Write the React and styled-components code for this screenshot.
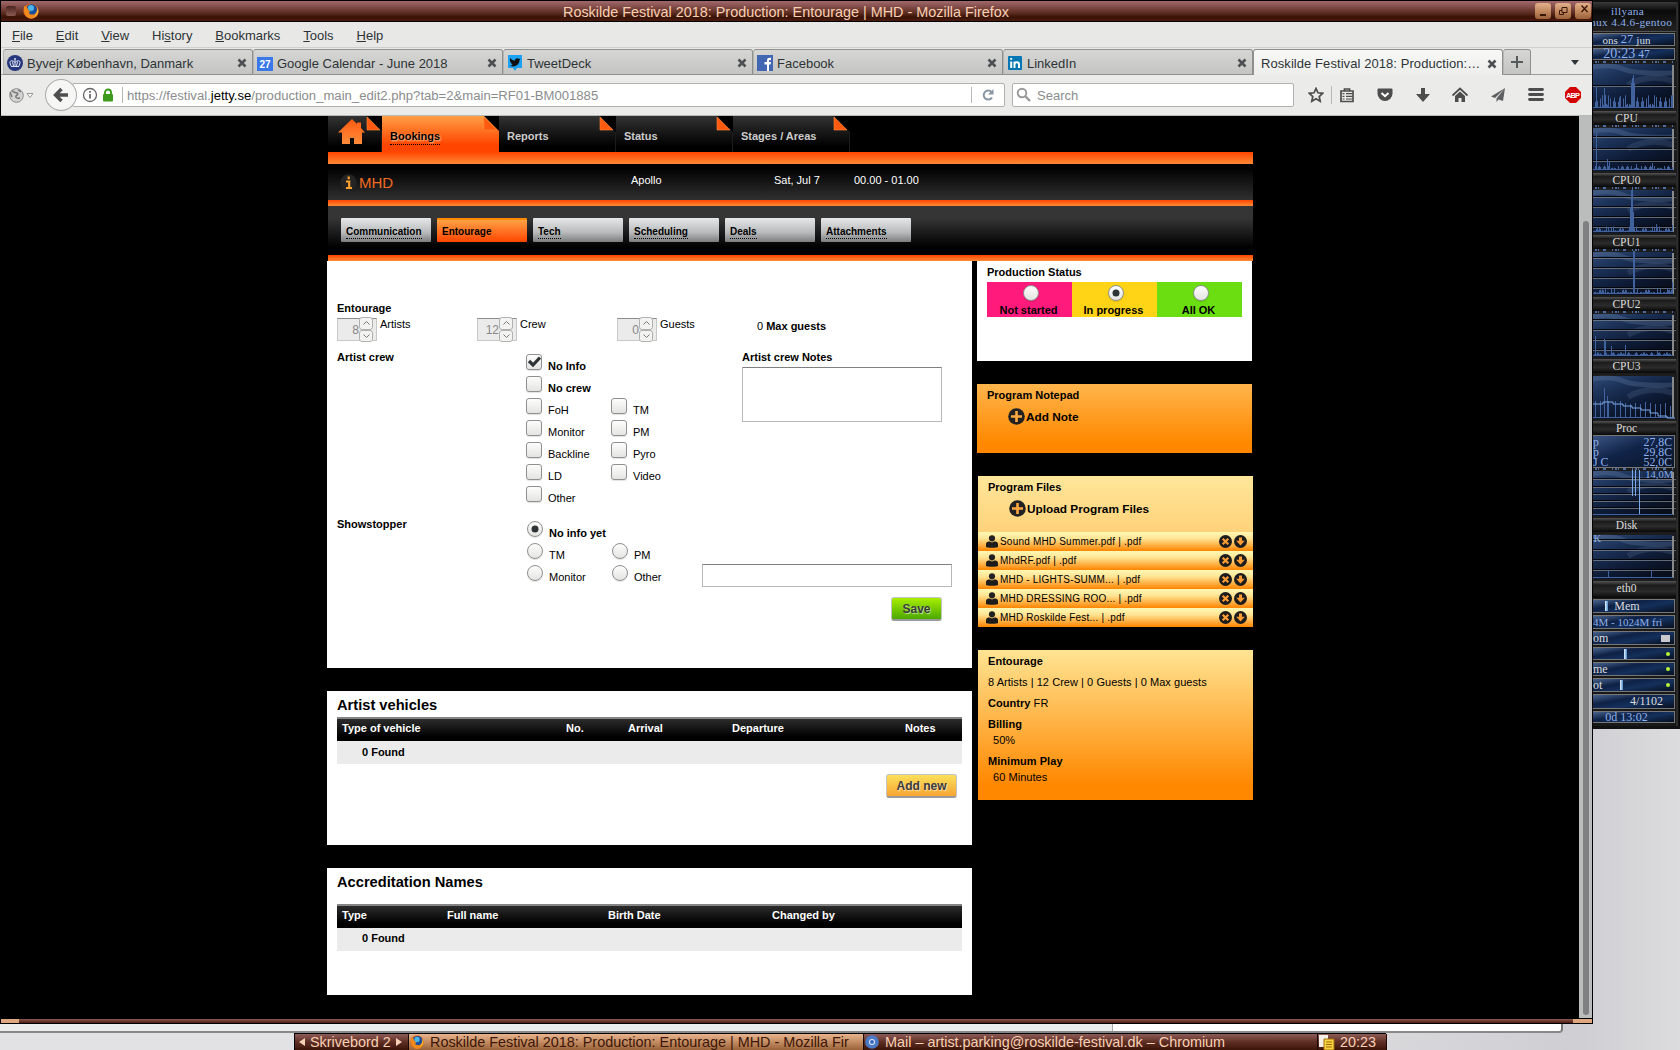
import React from "react";
import styled, { createGlobalStyle, css } from "styled-components";

const GlobalStyle = createGlobalStyle`
  * { box-sizing: border-box; }
  body {
    margin: 0;
    overflow: hidden;
    font-family: "Liberation Sans", Arial, sans-serif;
  }
  svg { display: block; flex: none; }
`;

/* desktop */

const Desktop = styled.div`
  width: 1680px;
  height: 1050px;
  display: grid;
  grid-template-columns: 1593px 87px;
  grid-template-rows: 1024px 26px;
  background: linear-gradient(90deg, #e2e2e4 70%, #cfcfd3 94%, #dcdcde);
  overflow: hidden;
`;

const Window = styled.div`
  display: flex;
  flex-direction: column;
  background: #000;
  padding: 0 1px;
`;

const TitleBar = styled.div`
  height: 22px;
  display: flex;
  align-items: center;
  border-top: 1px solid #000;
  border-bottom: 1px solid #000;
  background: linear-gradient(#a06a6c, #86504e 25%, #5c2c20 60%, #3a1206 80%, #4a1c0e);
  color: #f8d0b4;
`;

const WindowMenu = styled.i`
  width: 10px;
  height: 10px;
  margin: 0 7px 0 5px;
  border-radius: 2px;
  background: linear-gradient(#4c2420, #8a5a50);
`;

const WindowTitle = styled.div`
  flex: 1;
  padding-left: 524px;
  font-size: 14.4px;
  line-height: 20px;
  padding-top: 2px;
  white-space: nowrap;
`;

const WindowButtons = styled.div`
  display: flex;
  gap: 4px;
  padding-right: 1px;
`;

const WindowButton = styled.div`
  width: 16px;
  height: 16px;
  border-radius: 3px;
  background: linear-gradient(#e2b08c, #c48a60 50%, #9a6038);
`;

const MenuBar = styled.div`
  height: 26px;
  display: flex;
  gap: 22.9px;
  padding-left: 11px;
  font-size: 13px;
  line-height: 28px;
  color: #2e3436;
  background: #e8e8e6;
  border-bottom: 1px solid #cfcfcd;
`;

/* browser tabs */

const TabStrip = styled.div`
  height: 27px;
  display: flex;
  align-items: flex-end;
  padding-left: 2px;
  background: #e8e8e6;
  box-shadow: inset 0 -1px #9a9c9a;
`;

const BrowserTab = styled.div`
  width: ${(p) => p.$width || 250}px;
  height: 26px;
  display: flex;
  align-items: center;
  gap: 4px;
  padding: 2px 5px 0 ${(p) => (p.$active ? 7 : 3)}px;
  border: 1px solid #8e908e;
  border-left-color: ${(p) => (p.$active ? "#8e908e" : "#b4b6b4")};
  border-bottom-width: ${(p) => (p.$active ? 0 : 1)}px;
  border-radius: 3px 3px 0 0;
  background: ${(p) =>
    p.$active ? "linear-gradient(#f8f8f7, #edeeec)" : "linear-gradient(#d6d7d5, #c4c5c3)"};
  color: #2e3436;
  font-size: 13px;
  white-space: nowrap;
`;

const TabLabel = styled.span`
  flex: 1;
  overflow: hidden;
  letter-spacing: ${(p) => (p.$wide ? 0.07 : 0)}px;
`;

const NewTab = styled(BrowserTab)`
  width: 28px;
  padding: 0;
  justify-content: center;
`;

const TabListArrow = styled.div`
  flex: 1;
  height: 26px;
  display: flex;
  align-items: center;
  justify-content: flex-end;
  padding-right: 13px;
`;

/* address bar */

const Toolbar = styled.div`
  height: 41px;
  display: flex;
  align-items: center;
  padding-left: 8px;
  background: #ebebe9;
  border-bottom: 1px solid #b8bab8;
  color: #8a8c8c;
  font-size: 13px;
`;

const BackButton = styled.div`
  width: 32px;
  height: 32px;
  margin: 0 -5px 0 11px;
  display: grid;
  place-items: center;
  border: 1px solid #a9abaa;
  border-radius: 50%;
  background: #f6f6f5;
  z-index: 1;
`;

const Field = styled.div`
  width: ${(p) => p.$width}px;
  height: 24px;
  display: flex;
  align-items: center;
  background: #fff;
  border: 1px solid #b0b2b1;
  border-radius: 2px;
`;

const Separator = styled.i`
  width: 1px;
  height: ${(p) => p.$height || 16}px;
  background: #b7b9b8;
`;

const Url = styled.div`
  flex: 1;
  padding-left: 4px;
  font-size: 13.12px;
  b { color: #000; font-weight: 400; }
`;

const ToolIcons = styled.div`
  display: flex;
  align-items: center;
  margin-left: 14px;
`;

const ToolIcon = styled.div`
  width: 37.6px;
  display: grid;
  place-items: center;
`;

/* page */

const Viewport = styled.div`
  height: 902px;
  display: flex;
  justify-content: space-between;
  background: #000;
`;

const ScrollBar = styled.div`
  width: 13px;
  padding: 105px 3px 0 4px;
  background: #babdbc;
`;

const ScrollThumb = styled.div`
  height: 794px;
  border-radius: 3px;
  background: #7d8182;
`;

const WindowFooter = styled.div`
  height: 6px;
  border: solid #000;
  border-width: 1px 0;
  background: linear-gradient(90deg, #e0a880 18px, transparent 18px, transparent 1572px, #e0a880 1572px),
    linear-gradient(#8c5850, #4a1c10);
`;

const Page = styled.div`
  width: 926px;
  margin-left: 326px;
`;

const Header = styled.div`
  margin-left: 1px;
  width: 925px;
`;

const MainTabs = styled.div`
  height: 36px;
  display: flex;
`;

const MainTab = styled.div`
  width: ${(p) => p.$width || 117}px;
  padding: ${(p) => (p.$width ? "2px 0 0 10px" : "14px 0 0 8px")};
  display: flex;
  justify-content: space-between;
  background: linear-gradient(#323232, #000 85%);
  border-right: 1px solid #1c1c1c;
  color: #ccc;
  font-size: 11px;
  font-weight: bold;
  line-height: 13px;
  ${(p) =>
    p.$active &&
    css`
      background: linear-gradient(#ff9f45, #ff4500 80%);
      border-right: 0;
      color: #000;
      text-shadow: 1px 1px 2px #ffd0a0;
    `}
`;

const Fold = styled.svg`
  margin: ${(p) => (p.$home ? -2 : -14)}px -1px 0 0;
`;

const Dotted = styled.span`
  align-self: flex-start;
  padding-bottom: 1px;
  border-bottom: 1px dotted #000;
`;

const OrangeBar = styled.div`
  height: ${(p) => p.$height}px;
  background: linear-gradient(#ff4500, #ff8a35);
`;

const ArtistBar = styled.div`
  height: 36px;
  display: grid;
  grid-template-columns: 31px 272px 143px 80px 1fr;
  padding-top: 8px;
  background: linear-gradient(#000 10%, #303030);
  color: #fff;
  font-size: 11px;
  line-height: 17px;
`;

const ArtistIcon = styled.div`
  padding: 2px 0 0 12px;
`;

const ArtistName = styled.div`
  font-size: 15px;
  line-height: 21px;
  color: #f26a21;
`;

const SubTabs = styled.div`
  height: 49px;
  display: flex;
  gap: 6px;
  padding: 12px 0 0 13px;
  background: linear-gradient(#353535 25%, #000 85%);
`;

const SubTab = styled.div`
  width: 90px;
  height: 24px;
  padding: 8px 0 0 5px;
  display: flex;
  border-radius: 1px;
  background: linear-gradient(#e6e7e9, #b9babc 60%, #7c7d7f);
  color: #000;
  font-size: 10px;
  font-weight: bold;
  line-height: 11px;
  ${(p) =>
    p.$active &&
    css`
      background: linear-gradient(#ff8c00 8%, #ffa045 10%, #ff4500);
      ${Dotted} { border: 0; }
    `}
`;

const Columns = styled.div`
  display: flex;
  gap: 5px;
`;

const MainColumn = styled.div`
  width: 645px;
  display: flex;
  flex-direction: column;
  gap: 23px;
`;

const Card = styled.section`
  height: ${(p) => p.$height}px;
  padding: 0 10px;
  background: #fff;
  font-size: 11px;
`;

const FormTitle = styled.div`
  padding-top: 40px;
  height: 56px;
  font-weight: bold;
  line-height: 14px;
`;

const CountRow = styled.div`
  height: 33px;
  display: grid;
  grid-template-columns: 140px 140px 140px 1fr;
`;

const Count = styled.div`
  display: flex;
  gap: 3px;
  line-height: 14px;
`;

const MaxGuests = styled.div`
  padding: 2px 0 0;
  line-height: 14px;
`;

const NumberBox = styled.div`
  width: 40px;
  height: 23px;
  margin-top: 1px;
  display: flex;
  justify-content: flex-end;
  background: #ebebeb;
  border: 1px solid #c8c8c8;
  border-top-color: #8a8a8a;
  color: #888;
  font-size: 12px;
  line-height: 22px;
`;

const Spinner = styled.div`
  margin: -2px 3px 0 0;
`;

const Step = styled.div`
  width: 14px;
  height: 12.5px;
  display: grid;
  place-items: center;
  background: #f3f3f2;
  border: 1px solid #b0b2b0;
  border-radius: 3px;
`;

const CrewRow = styled.div`
  display: grid;
  grid-template-columns: ${(p) => (p.$tight ? "190px 175px 1fr" : "189px 216px 1fr")};
  height: ${(p) => p.$height}px;
`;

const Label = styled.div`
  font-weight: bold;
  line-height: 14px;
`;

const Options = styled.div`
  display: grid;
  grid-template-columns: 85px 85px;
  grid-auto-rows: 22px;
  padding-top: 4px;
`;

const Option = styled.div`
  display: flex;
  gap: 6px;
  grid-column: ${(p) => (p.$wide ? "1 / 3" : "auto")};
  font-weight: ${(p) => (p.$wide ? "bold" : "normal")};
  line-height: 25px;
  white-space: nowrap;
`;

const Check = styled.div`
  flex: none;
  width: 16px;
  height: 16px;
  border: 1px solid #8f918f;
  border-radius: ${(p) => (p.$round ? "50%" : "3px")};
  background: linear-gradient(#fdfdfd, #e4e4e2);
  box-shadow: 0 1px 1px rgba(0, 0, 0, 0.12);
`;

const NotesBox = styled.div`
  width: 200px;
  height: 55px;
  margin-top: 3px;
  border: 1px solid #b8b8b8;
  border-top-color: #808080;
`;

const OtherInput = styled.div`
  width: 250px;
  height: 23px;
  margin-top: 47px;
  border: 1px solid #b8b8b8;
  border-top-color: #808080;
`;

const Button = styled.div`
  width: ${(p) => p.$width}px;
  height: 24px;
  margin-left: auto;
  margin-right: ${(p) => p.$inset}px;
  border: 1px solid #c4c4c4;
  border-bottom: 2px solid #9a9a9a;
  border-radius: 3px;
  background: ${(p) =>
    p.$green ? "linear-gradient(#a8ee00, #4aa800)" : "linear-gradient(#fbe05a, #f7a533)"};
  color: #3a3a3a;
  font-size: 12px;
  font-weight: bold;
  line-height: 23px;
  text-align: center;
  text-shadow: 1px 1px 1px rgba(255, 255, 255, 0.6);
`;

const TableTitle = styled.h2`
  margin: 0;
  height: ${(p) => p.$height}px;
  padding-top: 5px;
  font-size: 14.67px;
  line-height: 18px;
`;

const TableHead = styled.div`
  height: 24px;
  display: grid;
  grid-template-columns: ${(p) => p.$columns};
  padding-left: 5px;
  border-top: 2px solid #848484;
  background: linear-gradient(#2c2c2c, #000 80%);
  color: #fff;
  font-weight: bold;
  line-height: 18px;
`;

const TableEmpty = styled.div`
  height: 23px;
  margin-bottom: 10px;
  padding-left: 25px;
  background: #ebebeb;
  font-weight: bold;
  line-height: ${(p) => p.$line || 23}px;
`;

/* sidebar */

const SideColumn = styled.div`
  width: 276px;
  display: flex;
  flex-direction: column;
  gap: 23px;
`;

const SideCard = styled.section`
  width: 275px;
  height: ${(p) => p.$height}px;
  padding: 4px 10px 0;
  background: ${(p) => p.$background || "#fff"};
  align-self: ${(p) => (p.$shift ? "flex-end" : "flex-start")};
  font-size: 11px;
  line-height: 14px;
`;

const StatusRow = styled.div`
  margin-top: 3px;
  display: grid;
  grid-template-columns: repeat(3, 85px);
`;

const Status = styled.div`
  height: 35px;
  display: flex;
  flex-direction: column;
  align-items: center;
  gap: 2px;
  padding: 3px 2px 0 0;
  background: ${(p) => p.$color};
  font-weight: bold;
  ${Check} { margin-left: 5px; }
`;

const AddLink = styled.div`
  display: flex;
  align-items: center;
  gap: 1px;
  margin: 6px 0 0 21px;
  font-size: 11.82px;
  font-weight: bold;
`;

const FileList = styled.div`
  margin: 15px -10px 0;
`;

const FileRow = styled.div`
  height: 19px;
  display: flex;
  align-items: center;
  gap: 2px;
  padding: 0 6px 0 8px;
  background: linear-gradient(#fff6b0 5%, #ffe493 35%, #ff8400);
  font-size: 10px;
  letter-spacing: 0.2px;
`;

const FileName = styled.span`
  flex: 1;
`;

const Fact = styled.div`
  margin-bottom: 7px;
  letter-spacing: 0.05px;
  p { margin: 2px 0 0 5px; }
`;

/* system monitor */

const Monitor = styled.aside`
  width: 87px;
  height: 729px;
  display: flex;
  flex-direction: column;
  background: linear-gradient(90deg, #191919 83px, #3a3a3a 84px, #050505 86px);
  border-top: 2px solid #111;
  border-bottom: 3px solid #111;
  color: #dcdcdc;
  font-family: "Liberation Serif", "Times New Roman", serif;
  overflow: hidden;
`;

const HostName = styled.div`
  height: 30px;
  width: 83px;
  padding: 4px 0 0;
  border-bottom: 1px solid #555;
  background: linear-gradient(#3a3a3a, #0a0a0a 30%, #222);
  color: #8fb0ea;
  font-size: 11.4px;
  line-height: 11px;
  letter-spacing: 0.3px;
  white-space: nowrap;
  p { margin: 0 0 0 18px; }
  p + p { margin: 0 0 0 -3px; }
`;

const Meter = styled.div`
  width: 82px;
  height: ${(p) => p.$height}px;
  margin: ${(p) => p.$gap || 1}px 0;
  display: flex;
  align-items: center;
  justify-content: ${(p) => p.$align || "center"};
  gap: 3px;
  padding: 0 ${(p) => p.$right || 14}px 0 0;
  border: 1px solid #777;
  border-left: 0;
  background: linear-gradient(170deg, #49648e, #0f2145 35%, #14305c 60%, #07101f);
  color: ${(p) => (p.$blue ? "#8fb0ea" : "#dcdcdc")};
  font-size: ${(p) => p.$size || 11}px;
  white-space: nowrap;
  big { font-size: 12.5px; color: #8fb0ea; }
  small { font-size: 11.5px; }
`;

const ChartLabel = styled.div`
  width: 83px;
  height: ${(p) => p.$height || 14}px;
  padding-right: 16px;
  background: linear-gradient(#555, #1b1b1b 25%, #2c2c2c 60%, #080808);
  font-size: 11.5px;
  line-height: 14px;
  text-align: center;
`;

const Temps = styled.div`
  width: 82px;
  height: 33px;
  display: grid;
  grid-template-columns: 1fr auto;
  padding: 1px 2px 0 0;
  border: 1px solid #777;
  border-left: 0;
  background: linear-gradient(160deg, #3a5480, #102348 45%, #0a1426);
  color: #8fb0ea;
  font-size: 11.8px;
  line-height: 10px;
`;

const Led = styled.i`
  width: 4px;
  height: 4px;
  border-radius: 50%;
  background: #b6f23a;
`;

const Slider = styled.i`
  width: 3px;
  height: 10px;
  margin: 0 ${(p) => p.$after}px 0 0;
  background: linear-gradient(90deg, #e8f4ff, #4a8ac8);
`;

/* bottom strip */

const Bottom = styled.div`
  grid-column: 1 / 3;
  display: flex;
  flex-direction: column;
`;

const BehindWindow = styled.div`
  width: 1563px;
  height: 9px;
  border-right: 2px solid #777;
  border-bottom: 2px solid #888;
  border-radius: 0 0 4px 0;
  background: linear-gradient(90deg, #ececec 1112px, #aaa 1112px, #aaa 1113px, #fff 1113px);
`;

const TaskBar = styled.div`
  width: 1092px;
  height: 17px;
  margin-left: 294px;
  display: grid;
  grid-template-columns: 114px 455px 454px 69px;
  border: solid #000;
  border-width: 1px 1px 0;
`;

const Task = styled.div`
  display: flex;
  align-items: center;
  gap: ${(p) => p.$gap || 5}px;
  padding-left: ${(p) => p.$pad || 4}px;
  border-right: 1px solid #1c0802;
  background: ${(p) =>
    p.$active
      ? "linear-gradient(#e8b48e, #c48c62 50%, #9a6238)"
      : "linear-gradient(#8e5c58, #5e2e24 50%, #3c1408)"};
  color: ${(p) => (p.$active ? "#3c1608" : "#f8d0b4")};
  font-size: 14.4px;
  line-height: 16px;
  white-space: nowrap;
  overflow: hidden;
`;

const Firefox = ({ size = 16 }) => (
  <svg width={size} height={size} viewBox="0 0 16 16">
    <circle cx="8" cy="8" r="7.6" fill="#e66a12" />
    <circle cx="8.6" cy="6.6" r="5.5" fill="#1d4f9c" />
    <circle cx="8" cy="5" r="3" fill="#4bb6e8" />
    <path d="M1 3C0 12 5 16 9 15.6c4 0 7-4 6.5-9C14 10 12 12 9 11.600 6 11.500 5 9.500 7.500 8.500 5 8 5 5 3.500 4Z" fill="#f08a1c" />
    <path d="M14 4c2 5 0 8-2.500 9.500C14 10 14.500 7 14 4Z" fill="#ffd23c" />
  </svg>
);

const CloseX = () => (
  <svg width="10" height="10" viewBox="0 0 10 10">
    <path d="M1.500 1.500l7 7m0-7l-7 7" stroke="#4c5052" strokeWidth="2.600" />
  </svg>
);

const Crown = () => (
  <svg width="16" height="16" viewBox="0 0 16 16">
    <circle cx="8" cy="8" r="8" fill="#25367c" />
    <path d="M4 11.500h8M4 11L2.800 7c1.200-2 3.200-1.500 5.200.500 2-2 4-2.500 5.200-.500L12 11M8 3v8M5.500 6.500L6.500 11M10.500 6.500l-1 4.500M7 4h2" stroke="#dde2f5" fill="none" />
  </svg>
);

const CalendarIcon = () => (
  <svg width="16" height="16" viewBox="0 0 16 16">
    <rect width="16" height="16" fill="#3a77e8" />
    <rect width="16" height="2" fill="#c8cdd8" />
    <text x="8" y="12.500" fontSize="10" fontWeight="bold" fill="#fff" textAnchor="middle">27</text>
  </svg>
);

const TweetDeckIcon = () => (
  <svg width="16" height="16" viewBox="0 0 16 16">
    <path d="M1 0h14v13h-5l-2 3-2-3H1z" fill="#1da1f2" />
    <path d="M3 3c2 2 3.500 2.500 5 2.500C8 3 11 2.500 12 4l1.500-.5-1 1.800C12.500 10 7 13 3 10.500c1 0 2-.3 2.500-1C3.500 8 2.500 5.500 3 3z" fill="#111" />
  </svg>
);

const FacebookIcon = () => (
  <svg width="16" height="16" viewBox="0 0 16 16">
    <rect width="16" height="16" fill="#4267b2" />
    <path d="M10 16V9.500H7.500V7H10V5.500C10 3 11.500 2.500 14 2.800V5c-1.500 0-2 0-2 1v1h2l-.4 2.500H12V16" fill="#fff" />
  </svg>
);

const LinkedInIcon = () => (
  <svg width="16" height="14" viewBox="-1 0 16 14">
    <rect width="14" height="14" rx="1" fill="#0077b5" />
    <path d="M3.200 5.500V12M3.200 2v1.800M6.500 12V5.500M6.500 8.500c0-3 4.500-3 4.500 0V12" stroke="#fff" strokeWidth="2" fill="none" />
  </svg>
);

const Radio = ({ checked }) => (
  <Check $round>
    {checked && (
      <svg width="14" height="14">
        <circle cx="7" cy="7" r="3.500" fill="#2e3436" />
      </svg>
    )}
  </Check>
);

const PlusIcon = () => (
  <svg width="17" height="17" viewBox="0 0 17 17">
    <circle cx="8.500" cy="8.500" r="8.300" fill="#222" />
    <path d="M8.500 3v11M3 8.500h11" stroke="#ffa940" strokeWidth="2.600" />
  </svg>
);

const UserIcon = () => (
  <svg width="12" height="13" viewBox="0 0 12 13">
    <circle cx="6" cy="3.300" r="3.100" fill="#222" />
    <path d="M0 12V9c0-2 2-2.500 3.500-2.500L6 7.500l2.500-1C10 6.500 12 7 12 9v3c0 1-12 1-12 0z" fill="#1c1c1c" />
  </svg>
);

const RoundIcon = ({ down }) => (
  <svg width="13" height="13" viewBox="0 0 13 13">
    <circle cx="6.500" cy="6.500" r="6.500" fill="#1d1d1d" />
    {down ? (
      <path d="M5 2.500h3v3.200h2.800L6.500 10.500 2.200 5.700H5z" fill="#ff9d35" />
    ) : (
      <path d="M3.700 3.700l5.600 5.600m0-5.600L3.700 9.300" stroke="#ff9d35" strokeWidth="2.200" />
    )}
  </svg>
);

// folded paper corner at the right end of every main tab
const Corner = ({ home }) => (
  <Fold width="17" height="16" viewBox="0 0 17 16" $home={home}>
    <path d="M1 0h16v16z" fill="#000" />
    <path d="M1 1v13h13z" fill="#ff5a10" stroke="#ff8a35" strokeWidth=".6" />
  </Fold>
);

const HomeIcon = () => (
  <svg width="28" height="27" viewBox="0 0 28 27">
    <defs>
      <linearGradient id="home" x2="0" y2="1">
        <stop stopColor="#ff5a10" />
        <stop offset="1" stopColor="#ff8c3a" />
      </linearGradient>
    </defs>
    <path d="M14 1l5 5V4.500h4V10l4 4.500h-3V26h-8v-6h-4v6H4V14.500H0z" fill="url(#home)" />
  </svg>
);

const Chart = ({ height, bars, lines, dots = true, trace, seed = 1, text, textX = 80 }) => {
  let columns = "";
  for (let x = 0; x < 80; x++) {
    const noise = ((x * x * 7 + x * seed * 13) % 23) / 23;
    const h = bars[x] || (bars.base || 0) * noise * noise + 1;
    columns += `M${x + 0.5} ${height - 3}v${-h}`;
  }
  return (
    <svg width="84" height={height}>
      <defs>
        <linearGradient id="sky" x2="0.7" y2="1">
          <stop stopColor="#304b78" />
          <stop offset=".3" stopColor="#1c3258" />
          <stop offset=".65" stopColor="#0e1c38" />
          <stop offset="1" stopColor="#080e1c" />
        </linearGradient>
      </defs>
      <rect width="84" height={height} fill="#1c1c1c" />
      <rect y="3" width="80" height={height - 5} fill="url(#sky)" />
      <path d="M0 6Q18 3 30 8T80 12" stroke="#6680a6" strokeOpacity=".3" strokeWidth="5" fill="none" />
      <path d="M35 24Q55 12 80 20" stroke="#7088a8" strokeOpacity=".2" strokeWidth="6" fill="none" />
      {dots && <path d="M2 1h80" stroke="#5f86cc" strokeWidth="1.500" strokeDasharray="2 1 1 4 3 6 1 2" />}
      {lines.map((y) => (
        <g key={y}>
          <path d={`M0 ${y}.500h83`} stroke="#03060c" />
          <path d={`M0 ${y + 1}.500h83`} stroke="#777e88" strokeOpacity=".8" />
        </g>
      ))}
      <path d={`M80 4v${height - 7}`} stroke="#878a8c" strokeWidth="2" />
      <path d={columns} stroke="#41629c" />
      {trace && <path d={trace} stroke="#7ca6e4" fill="none" />}
      {text && (
        <text x={textX} y="10" textAnchor="end" fontSize="10.500" fill="#8fb0ea">{text}</text>
      )}
    </svg>
  );
};

const favicons = [Crown, CalendarIcon, TweetDeckIcon, FacebookIcon, LinkedInIcon];
const browserTabs = [
  "Byvejr København, Danmark",
  "Google Calendar - June 2018",
  "TweetDeck",
  "Facebook",
  "LinkedIn",
];

const menus = [
  ["", "F", "ile"],
  ["", "E", "dit"],
  ["", "V", "iew"],
  ["Hi", "s", "tory"],
  ["", "B", "ookmarks"],
  ["", "T", "ools"],
  ["", "H", "elp"],
];

const files = [
  "Sound MHD Summer.pdf | .pdf",
  "MhdRF.pdf | .pdf",
  "MHD - LIGHTS-SUMM... | .pdf",
  "MHD DRESSING ROO... | .pdf",
  "MHD Roskilde Fest... | .pdf",
];

const crewOptions = ["FoH", "TM", "Monitor", "PM", "Backline", "Pyro", "LD", "Video", "Other"];

const BrowserChrome = () => (
  <>
    <TitleBar>
      <WindowMenu />
      <Firefox />
      <WindowTitle>Roskilde Festival 2018: Production: Entourage | MHD - Mozilla Firefox</WindowTitle>
      <WindowButtons>
        <WindowButton>
          <svg width="16" height="16"><path d="M5 12h6" stroke="#3a1608" strokeWidth="2" /></svg>
        </WindowButton>
        <WindowButton>
          <svg width="16" height="16"><path d="M7 4.500h5v5H7zM7 7.500H4.500v4h4V10" stroke="#3a1608" fill="none" /></svg>
        </WindowButton>
        <WindowButton>
          <svg width="16" height="16"><path d="M6.500 2.500l6 6.500m0-6.500l-6 6.500" stroke="#3a1608" strokeWidth="1.400" /></svg>
        </WindowButton>
      </WindowButtons>
    </TitleBar>
    <MenuBar>
      {menus.map(([before, key, after]) => (
        <span key={after}>{before}<u>{key}</u>{after}</span>
      ))}
    </MenuBar>
    <TabStrip>
      {browserTabs.map((label, i) => {
        const Icon = favicons[i];
        return (
          <BrowserTab key={label}>
            <Icon />
            <TabLabel>{label}</TabLabel>
            <CloseX />
          </BrowserTab>
        );
      })}
      <BrowserTab $active>
        <TabLabel $wide>Roskilde Festival 2018: Production:…</TabLabel>
        <CloseX />
      </BrowserTab>
      <NewTab>
        <svg width="12" height="12"><path d="M6 0v12M0 6h12" stroke="#555a5c" strokeWidth="2" /></svg>
      </NewTab>
      <TabListArrow>
        <svg width="8" height="5"><path d="M0 0h8L4 5z" fill="#2e3436" /></svg>
      </TabListArrow>
    </TabStrip>
    <Toolbar>
      <svg width="25" height="17" viewBox="0 0 25 17">
        <circle cx="7.500" cy="8.500" r="6.800" fill="#d4d4d4" stroke="#8c8c8c" />
        <path d="M3 3c1 3 3 2 5 3s0 2-1 3 1 3 4 2M9 3l3 2M1 5l2 5" stroke="#777" fill="none" strokeWidth="1.400" />
        <path d="M18 6.500h6l-3 4z" fill="#fff" stroke="#999" />
      </svg>
      <BackButton>
        <svg width="16" height="16" viewBox="0 0 16 16">
          <path d="M8.500 2L2.500 8l6 6M3 8h12" stroke="#4d4d4d" strokeWidth="3.400" fill="none" />
        </svg>
      </BackButton>
      <Field $width={935}>
        <svg width="42" height="16" viewBox="0 0 42 16">
          <circle cx="17" cy="8" r="6.500" fill="none" stroke="#666" strokeWidth="1.300" />
          <path d="M17 7v4.500M17 4v1.700" stroke="#555" strokeWidth="1.600" />
          <rect x="30" y="7" width="10" height="7.500" rx="1" fill="#3d9a1c" />
          <path d="M32 8V5.500a3 3 0 0 1 6 0V8" stroke="#3d9a1c" strokeWidth="1.900" fill="none" />
        </svg>
        <svg width="7" height="1" />
        <Separator />
        <Url>https://festival.<b>jetty.se</b>/production_main_edit2.php?tab=2&amp;main=RF01-BM001885</Url>
        <Separator />
        <svg width="32" height="16" viewBox="0 0 32 16">
          <path d="M20 10.500A4.500 4.500 0 1 1 19.500 5" stroke="#8795a5" strokeWidth="2" fill="none" />
          <path d="M21.500 2v5.500H16z" fill="#8795a5" />
        </svg>
      </Field>
      <svg width="7" height="1" />
      <Field $width={283}>
        <svg width="24" height="18" viewBox="0 0 24 18">
          <circle cx="9" cy="7" r="4.300" stroke="#999" strokeWidth="1.900" fill="none" />
          <path d="M12 10l5 5" stroke="#999" strokeWidth="2.400" />
        </svg>
        <span>Search</span>
      </Field>
      <ToolIcons>
        <svg width="16" height="16" viewBox="0 0 16 16">
          <path d="M8 1.500l2 4.300 4.700.500-3.500 3.200 1 4.700L8 11.800l-4.200 2.400 1-4.700L1.300 6.300 6 5.800z" stroke="#4d4d4d" strokeWidth="1.700" fill="none" />
        </svg>
        <svg width="7" height="1" />
        <Separator $height={18} />
        <svg width="8" height="16" />
        <svg width="14" height="16" viewBox="0 0 14 16">
          <path d="M1 4h12v10.500H1zM4.500 3.500V2h5v1.500" stroke="#4d4d4d" strokeWidth="1.700" fill="none" />
          <path d="M2.500 6.700h2M6 6.700h6M2.500 9.400h2M6 9.400h6M2.500 12h2M6 12h6" stroke="#4d4d4d" strokeWidth="1.200" />
        </svg>
        <svg width="12" height="1" />
        <ToolIcon>
          <svg width="16" height="16" viewBox="0 0 16 16">
            <path d="M1.500 1.500h13q1 0 1 1v4a7.500 7.500 0 0 1-15 0v-4q0-1 1-1z" fill="#4d4d4d" />
            <path d="M4.500 6L8 9.200 11.500 6" stroke="#fff" strokeWidth="2" fill="none" />
          </svg>
        </ToolIcon>
        <ToolIcon>
          <svg width="16" height="16" viewBox="0 0 16 16"><path d="M6 1h4v6h5l-7 8-7-8h5z" fill="#4d4d4d" /></svg>
        </ToolIcon>
        <ToolIcon>
          <svg width="16" height="16" viewBox="0 0 16 16">
            <path d="M.5 8.500L8 1.500l7.500 7" stroke="#4d4d4d" strokeWidth="1.800" fill="none" />
            <path d="M8 4.500l5 4.500v6H9.500v-4h-3v4H3V9z" fill="#4d4d4d" />
          </svg>
        </ToolIcon>
        <ToolIcon>
          <svg width="16" height="16" viewBox="0 0 16 16">
            <path d="M15 1L1 9.500l4 1.500zM15 1L6.500 11.500V15l2-2.500L13 14z" fill="#5d6060" />
          </svg>
        </ToolIcon>
        <ToolIcon>
          <svg width="16" height="16" viewBox="0 0 16 16">
            <path d="M1.500 2.500h13M1.500 7.500h13M1.500 12.500h13" stroke="#4d4d4d" strokeWidth="2.800" strokeLinecap="round" />
          </svg>
        </ToolIcon>
        <ToolIcon>
          <svg width="16" height="16" viewBox="0 0 16 16">
            <path d="M5 0h6l5 5v6l-5 5H5l-5-5V5z" fill="#d40000" />
            <text x="8" y="10.800" fontSize="7.500" fontWeight="bold" fill="#fff" textAnchor="middle" textLength="14">ABP</text>
          </svg>
        </ToolIcon>
      </ToolIcons>
    </Toolbar>
  </>
);

const NumberField = ({ value, label }) => (
  <Count>
    <NumberBox>
      {value}
      <Spinner>
        <Step><svg width="7" height="4"><path d="M.5 3.500l3-3 3 3" stroke="#777" fill="none" /></svg></Step>
        <Step><svg width="7" height="4"><path d="M.5 .5l3 3 3-3" stroke="#777" fill="none" /></svg></Step>
      </Spinner>
    </NumberBox>
    <span>{label}</span>
  </Count>
);

const EntourageForm = () => (
  <Card $height={407}>
    <FormTitle>Entourage</FormTitle>
    <CountRow>
      <NumberField value={8} label="Artists" />
      <NumberField value={12} label="Crew" />
      <NumberField value={0} label="Guests" />
      <MaxGuests>0 <b>Max guests</b></MaxGuests>
    </CountRow>
    <CrewRow $height={167}>
      <Label>Artist crew</Label>
      <Options>
        <Option $wide>
          <Check>
            <svg width="14" height="14"><path d="M2 6l4 4 7-7.500" stroke="#2e3436" strokeWidth="3.200" fill="none" /></svg>
          </Check>
          No Info
        </Option>
        <Option $wide><Check />No crew</Option>
        {crewOptions.map((name) => (
          <Option key={name}><Check />{name}</Option>
        ))}
      </Options>
      <div>
        <Label>Artist crew Notes</Label>
        <NotesBox />
      </div>
    </CrewRow>
    <CrewRow $tight $height={80}>
      <Label>Showstopper</Label>
      <Options>
        <Option $wide><Radio checked />No info yet</Option>
        {["TM", "PM", "Monitor", "Other"].map((name) => (
          <Option key={name}><Radio />{name}</Option>
        ))}
      </Options>
      <OtherInput />
    </CrewRow>
    <Button $green $width={51} $inset={20}>Save</Button>
  </Card>
);

const Sidebar = () => (
  <SideColumn>
    <SideCard $height={100}>
      <b>Production Status</b>
      <StatusRow>
        <Status $color="#ff1a7c"><Radio />Not started</Status>
        <Status $color="#ffd416"><Radio checked />In progress</Status>
        <Status $color="#6ade10"><Radio />All OK</Status>
      </StatusRow>
    </SideCard>
    <SideCard $height={69} $background="linear-gradient(#ffb54c, #ff8800 85%)">
      <b>Program Notepad</b>
      <AddLink><PlusIcon />Add Note</AddLink>
    </SideCard>
    <SideCard $height={151} $shift $background="linear-gradient(#ffe69a, #ffd27a 56px)">
      <b>Program Files</b>
      <AddLink><PlusIcon />Upload Program Files</AddLink>
      <FileList>
        {files.map((name) => (
          <FileRow key={name}>
            <UserIcon />
            <FileName>{name}</FileName>
            <RoundIcon />
            <RoundIcon down />
          </FileRow>
        ))}
      </FileList>
    </SideCard>
    <SideCard $height={150} $shift $background="linear-gradient(#ffe493, #ff8800 90%)">
      <Fact><b>Entourage</b></Fact>
      <Fact>8 Artists | 12 Crew | 0 Guests | 0 Max guests</Fact>
      <Fact><b>Country</b> FR</Fact>
      <Fact><b>Billing</b><p>50%</p></Fact>
      <Fact><b>Minimum Play</b><p>60 Minutes</p></Fact>
    </SideCard>
  </SideColumn>
);

const FestivalPage = () => (
  <Page>
    <Header>
      <MainTabs>
        <MainTab $width={54}><HomeIcon /><Corner home /></MainTab>
        <MainTab $active><Dotted>Bookings</Dotted><Corner /></MainTab>
        <MainTab><span>Reports</span><Corner /></MainTab>
        <MainTab><span>Status</span><Corner /></MainTab>
        <MainTab><span>Stages / Areas</span><Corner /></MainTab>
      </MainTabs>
      <OrangeBar $height={12} />
      <ArtistBar>
        <ArtistIcon>
          <svg width="17" height="17" viewBox="0 0 17 17">
            <circle cx="8.500" cy="8.500" r="8.200" fill="#242424" />
            <path d="M8.700 2.500v2.800M6 7.500h3.200V14M6 14h6" stroke="#ffa02c" strokeWidth="2.200" fill="none" />
          </svg>
        </ArtistIcon>
        <ArtistName>MHD</ArtistName>
        <span>Apollo</span>
        <span>Sat, Jul 7</span>
        <span>00.00 - 01.00</span>
      </ArtistBar>
      <OrangeBar $height={6} />
      <SubTabs>
        {["Communication", "Entourage", "Tech", "Scheduling", "Deals", "Attachments"].map((name) => (
          <SubTab key={name} $active={name === "Entourage"}><Dotted>{name}</Dotted></SubTab>
        ))}
      </SubTabs>
      <OrangeBar $height={6} />
    </Header>
    <Columns>
      <MainColumn>
        <EntourageForm />
        <Card $height={154}>
          <TableTitle $height={26}>Artist vehicles</TableTitle>
          <TableHead $columns="224px 62px 104px 173px 1fr">
            <span>Type of vehicle</span>
            <span>No.</span>
            <span>Arrival</span>
            <span>Departure</span>
            <span>Notes</span>
          </TableHead>
          <TableEmpty>0 Found</TableEmpty>
          <Button $width={71} $inset={5}>Add new</Button>
        </Card>
        <Card $height={127}>
          <TableTitle $height={36}>Accreditation Names</TableTitle>
          <TableHead $columns="105px 161px 164px 1fr">
            <span>Type</span>
            <span>Full name</span>
            <span>Birth Date</span>
            <span>Changed by</span>
          </TableHead>
          <TableEmpty $line={21}>0 Found</TableEmpty>
        </Card>
      </MainColumn>
      <Sidebar />
    </Columns>
  </Page>
);

const SystemMonitor = () => (
  <Monitor>
    <HostName><p>illyana</p><p>nux 4.4.6-gentoo</p></HostName>
    <Meter $height={13}>ons <big>27</big> jun</Meter>
    <Meter $height={12} $blue $size={14}>20:23 <small>47</small></Meter>
    <Chart height={50} seed={3} bars={{ base: 14, 3: 22, 11: 20, 12: 13, 27: 12, 38: 25, 39: 30, 40: 33, 41: 25, 63: 11, 79: 13 }} lines={[24]} />
    <ChartLabel>CPU</ChartLabel>
    <Chart height={48} seed={5} bars={{ base: 4, 3: 37, 14: 11, 16: 9, 43: 6, 59: 7 }} lines={[11, 23, 35]} />
    <ChartLabel>CPU0</ChartLabel>
    <Chart height={48} seed={7} bars={{ base: 6, 37: 25, 38: 42, 39: 43, 40: 20, 63: 8, 79: 7 }} lines={[9, 19, 29, 39]} />
    <ChartLabel>CPU1</ChartLabel>
    <Chart height={48} seed={2} bars={{ base: 5, 12: 6, 40: 43, 41: 43, 74: 6, 79: 12 }} lines={[8, 18, 28, 38]} />
    <ChartLabel>CPU2</ChartLabel>
    <Chart height={48} seed={4} bars={{ base: 3, 2: 20, 11: 17, 12: 15, 18: 10, 32: 11, 64: 6 }} lines={[8, 18, 28, 38]} />
    <ChartLabel>CPU3</ChartLabel>
    <Chart
      height={48}
      dots={false}
      bars={{ 2: 17, 7: 17, 11: 30, 14: 22, 15: 17, 22: 17, 27: 17, 32: 15, 37: 14, 42: 15, 47: 14, 52: 16, 57: 15, 62: 14, 67: 14, 72: 15, 77: 12 }}
      lines={[]}
      trace="M0 31h10v-2h10v2h10v2h9v2h9v2h9v3h8v3h9v2h8"
    />
    <ChartLabel>Proc</ChartLabel>
    <Temps>
      <span>p</span><span>27,8C</span>
      <span>p</span><span>29,8C</span>
      <span>J C</span><span>52,0C</span>
    </Temps>
    <Chart height={50} bars={{}} lines={[10, 18, 25, 32, 39]} trace="M39.500 2v26M42.500 2v26M46.500 2v44" text="14,0M" />
    <ChartLabel>Disk</ChartLabel>
    <Chart height={49} dots={false} bars={{ 15: 8, 58: 8 }} lines={[7, 17, 27, 37]} text="K" textX={8} />
    <ChartLabel $height={17}>eth0</ChartLabel>
    <Meter $height={14} $size={12} $right={22}><Slider $after={3} />Mem</Meter>
    <Meter $height={14} $blue $align="flex-start">4M - 1024M fri</Meter>
    <Meter $height={14} $align="space-between" $right={4} $size={12}>
      om <svg width="9" height="7"><rect width="9" height="7" fill="#c8c8cc" /></svg>
    </Meter>
    <Meter $height={13} $align="flex-end" $right={4}><Slider $after={36} /><Led /></Meter>
    <Meter $height={14} $align="space-between" $right={4} $size={12}>me <Led /></Meter>
    <Meter $height={14} $align="space-between" $right={4} $size={12}>ot <Slider $after={26} /><Led /></Meter>
    <Meter $height={15} $align="flex-end" $size={12} $right={11}>4/1102</Meter>
    <Meter $height={12} $blue $size={12}>0d 13:02</Meter>
  </Monitor>
);

const App = () => (
  <>
    <GlobalStyle />
    <Desktop>
      <Window>
        <BrowserChrome />
        <Viewport>
          <FestivalPage />
          <ScrollBar><ScrollThumb /></ScrollBar>
        </Viewport>
        <WindowFooter />
      </Window>
      <SystemMonitor />
      <Bottom>
        <BehindWindow />
        <TaskBar>
          <Task>
            <svg width="6" height="8"><path d="M6 0v8L0 4z" fill="#f8d0b4" /></svg>
            Skrivebord 2
            <svg width="6" height="8"><path d="M0 0v8l6-4z" fill="#f8d0b4" /></svg>
          </Task>
          <Task $active $pad={1} $gap={6}>
            <Firefox size={14} />
            Roskilde Festival 2018: Production: Entourage | MHD - Mozilla Fir
          </Task>
          <Task $pad={1} $gap={6}>
            <svg width="14" height="14" viewBox="0 0 14 14">
              <circle cx="7" cy="7" r="6.800" fill="#4a7ac8" />
              <circle cx="7" cy="7" r="3" fill="#dfe9fb" />
              <circle cx="7" cy="7" r="2" fill="#3a68c0" />
            </svg>
            Mail – artist.parking@roskilde-festival.dk – Chromium
          </Task>
          <Task $pad={1}>
            <svg width="16" height="15" viewBox="0 0 16 15">
              <path d="M0 0h9v12H0z" fill="#f4f0e8" />
              <path d="M5 4h10v11H5z" fill="#f4d640" stroke="#a86a10" />
              <path d="M7 7h6M7 9.500h6M7 12h6" stroke="#a86a10" />
            </svg>
            20:23
          </Task>
        </TaskBar>
      </Bottom>
    </Desktop>
  </>
);

export default App;
